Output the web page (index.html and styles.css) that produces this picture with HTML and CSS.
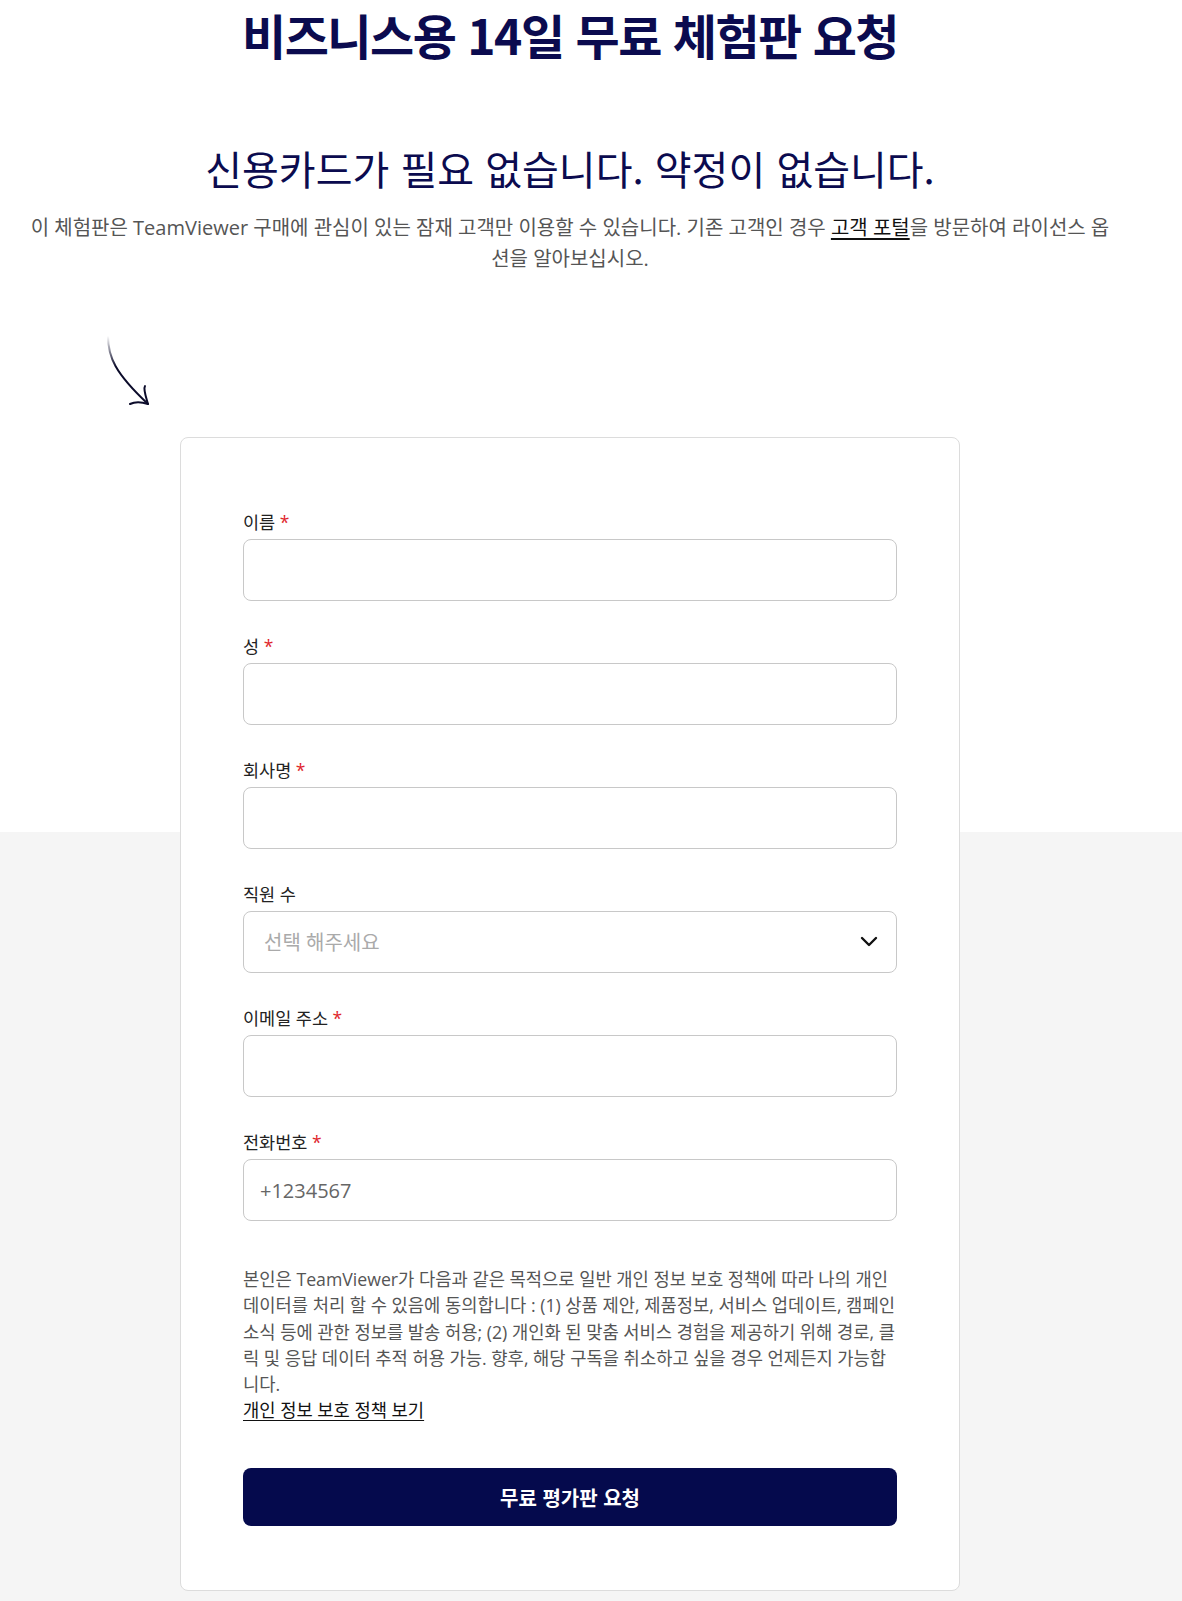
FILE: index.html
```html
<!DOCTYPE html>
<html lang="ko">
<head>
<meta charset="utf-8">
<title>비즈니스용 14일 무료 체험판 요청</title>
<link rel="stylesheet" href="styles.css">
</head>
<body>
<div class="page">
  <h1 class="title">비즈니스용 14일 무료 체험판 요청</h1>
  <p class="sub">신용카드가 필요 없습니다. 약정이 없습니다.</p>
  <p class="intro">이 체험판은 TeamViewer 구매에 관심이 있는 잠재 고객만 이용할 수 있습니다. 기존 고객인 경우 <a href="#" class="dark-link">고객 포털</a>을 방문하여 라이선스 옵션을 알아보십시오.</p>
  <svg class="arrow" width="50" height="75" viewBox="0 0 50 75" aria-hidden="true">
    <defs>
      <linearGradient id="fade" x1="0" y1="0" x2="0" y2="1">
        <stop offset="0" stop-color="#ffffff"/>
        <stop offset="0.45" stop-color="#0b0b2a"/>
        <stop offset="1" stop-color="#0b0b2a"/>
      </linearGradient>
    </defs>
    <path d="M3 1 C 3 22, 10 38, 43 69" fill="none" stroke="url(#fade)" stroke-width="2" stroke-linecap="round"/>
    <path d="M40 51 C 38 54, 41 62, 43 69 M25 69 C 31 66, 37 67, 43 69" fill="none" stroke="#0b0b2a" stroke-width="2" stroke-linecap="round"/>
  </svg>
  <form class="card">
    <div class="field">
      <label class="label">이름 <span class="req">*</span></label>
      <input class="input" type="text">
    </div>
    <div class="field">
      <label class="label">성 <span class="req">*</span></label>
      <input class="input" type="text">
    </div>
    <div class="field">
      <label class="label">회사명 <span class="req">*</span></label>
      <input class="input" type="text">
    </div>
    <div class="field">
      <label class="label">직원 수</label>
      <div class="select-wrap">
        <select class="input select">
          <option>선택 해주세요</option>
        </select>
        <svg class="chevron" width="18" height="12" viewBox="0 0 18 12" aria-hidden="true">
          <path d="M2 2 L9 9 L16 2" fill="none" stroke="#111" stroke-width="2.4" stroke-linecap="round" stroke-linejoin="round"/>
        </svg>
      </div>
    </div>
    <div class="field">
      <label class="label">이메일 주소 <span class="req">*</span></label>
      <input class="input" type="email">
    </div>
    <div class="field">
      <label class="label">전화번호 <span class="req">*</span></label>
      <input class="input phone" type="tel" placeholder="+1234567">
    </div>
    <p class="consent">본인은 TeamViewer가 다음과 같은 목적으로 일반 개인 정보 보호 정책에 따라 나의 개인 데이터를 처리 할 수 있음에 동의합니다 : (1) 상품 제안, 제품정보, 서비스 업데이트, 캠페인 소식 등에 관한 정보를 발송 허용; (2) 개인화 된 맞춤 서비스 경험을 제공하기 위해 경로, 클릭 및 응답 데이터 추적 허용 가능. 향후, 해당 구독을 취소하고 싶을 경우 언제든지 가능합니다.<br><a href="#" class="dark-link">개인 정보 보호 정책 보기</a></p>
    <button type="button" class="submit">무료 평가판 요청</button>
  </form>
</div>
</body>
</html>
```
FILE: styles.css
```css
* { box-sizing: border-box; }
html, body { margin: 0; padding: 0; }
body {
  background: linear-gradient(to bottom, #ffffff 0, #ffffff 832px, #f5f5f5 832px, #f5f5f5 100%);
  font-family: "Open Sans", "Noto Sans CJK KR", sans-serif;
  color: #222;
  min-height: 1601px;
}
.page {
  width: 1140px;
  display: flex;
  flex-direction: column;
}
.title {
  margin: 0;
  padding-top: 4px;
  text-align: center;
  font-family: "Noto Sans CJK KR", sans-serif;
  font-weight: 700;
  font-size: 48px;
  line-height: 60px;
  color: #0b0b4f;
  letter-spacing: -1.5px;
}
.sub {
  margin: 80px 0 0;
  text-align: center;
  font-family: "Noto Sans CJK KR", sans-serif;
  font-weight: 400;
  font-size: 40px;
  line-height: 48px;
  color: #0b0b4f;
}
.intro {
  margin: 21px 30px 0;
  text-align: center;
  font-size: 20px;
  line-height: 30.6px;
  color: #555;
}
.dark-link {
  color: #111;
  text-decoration: underline;
  text-underline-offset: 3px;
}
.arrow {
  display: block;
  margin: 61px 0 0 105px;
}
.card {
  width: 780px;
  margin: 27px auto 12px;
  background: #fff;
  border: 1px solid #dcdcdc;
  border-radius: 8px;
  padding: 72px 62px 64px;
  display: flex;
  flex-direction: column;
}
.field {
  display: flex;
  flex-direction: column;
  gap: 5px;
  margin-bottom: 33px;
}
.field:last-of-type { margin-bottom: 0; }
.label {
  font-size: 17.5px;
  line-height: 24px;
  color: #222;
}
.req { color: #e0262d; }
.input {
  width: 100%;
  height: 62px;
  border: 1px solid #c8c8c8;
  border-radius: 8px;
  background: #fff;
  font-family: "Open Sans", "Noto Sans CJK KR", sans-serif;
  font-size: 20px;
  padding: 0 16px;
  color: #222;
  outline: none;
}
.select-wrap { position: relative; }
.select {
  appearance: none;
  -webkit-appearance: none;
  padding-left: 20px;
  color: #aaa;
}
.chevron {
  position: absolute;
  right: 19px;
  top: 25px;
  pointer-events: none;
}
.phone::placeholder { color: #666; }
.consent {
  margin: 45px 0 0;
  font-size: 17.7px;
  line-height: 26.2px;
  color: #555;
}
.submit {
  margin-top: 45px;
  height: 58px;
  border: none;
  border-radius: 8px;
  background: #050a4d;
  color: #fff;
  font-family: "Noto Sans CJK KR", sans-serif;
  font-weight: 700;
  font-size: 20px;
  cursor: pointer;
}
```
